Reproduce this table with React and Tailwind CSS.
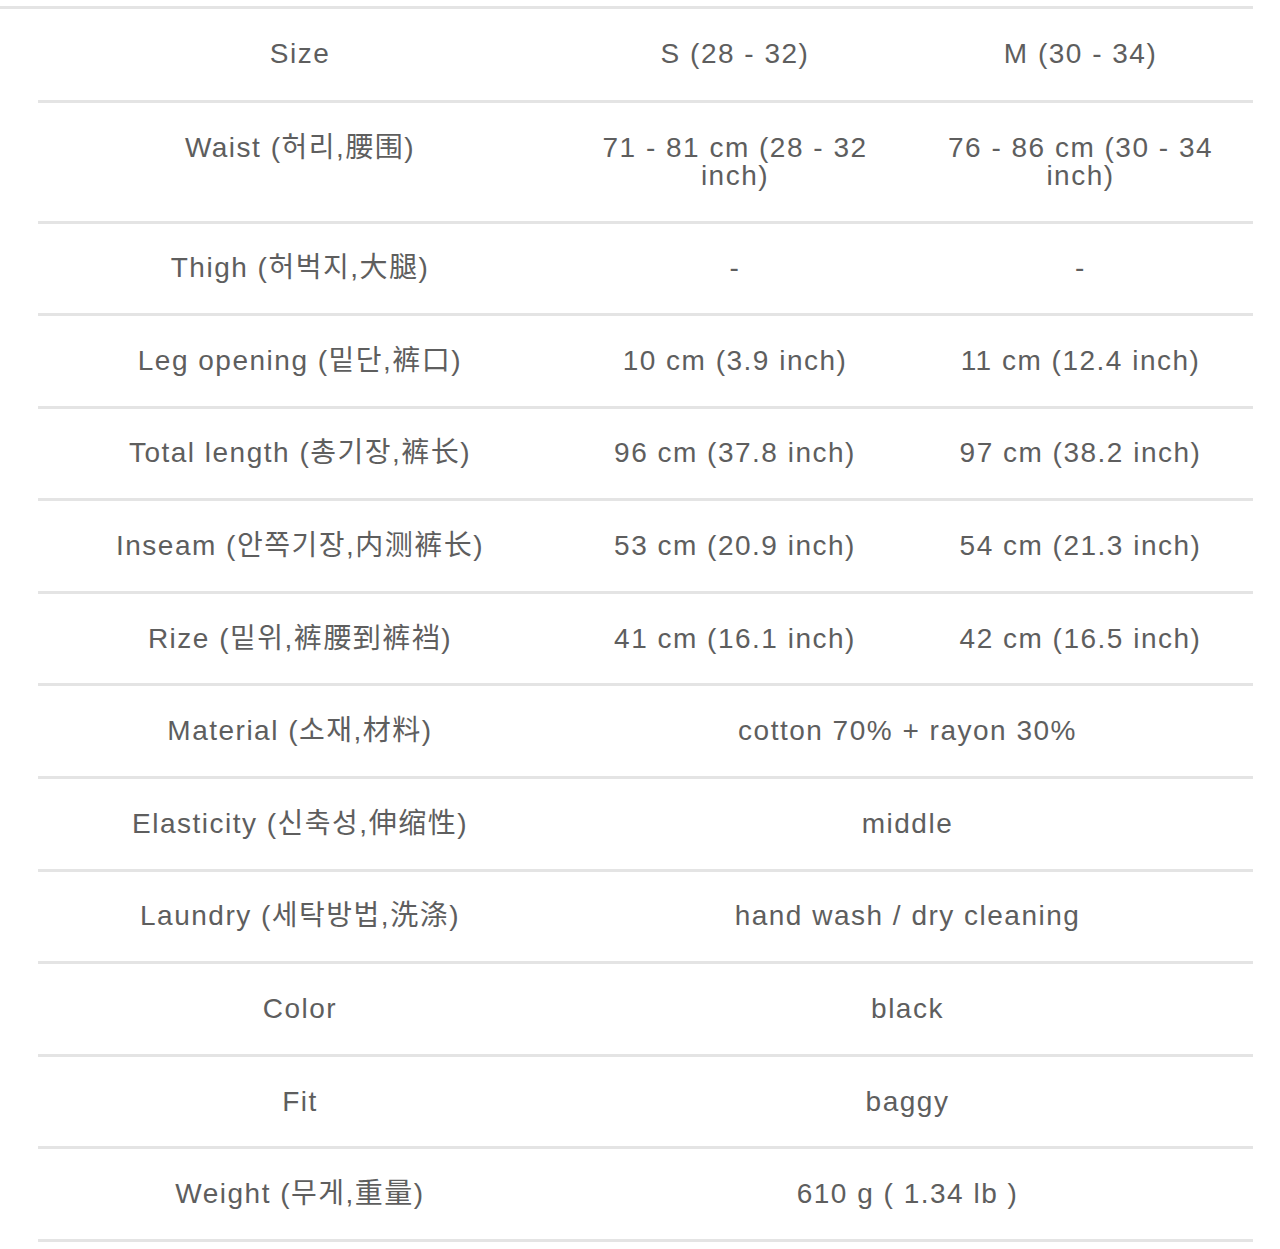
const rows = [
  { label: 'Waist (허리,腰围)', s: ['71 - 81 cm (28 - 32', 'inch)'], m: ['76 - 86 cm (30 - 34', 'inch)'], tall: true },
  { label: 'Thigh (허벅지,大腿)', s: '-', m: '-' },
  { label: 'Leg opening (밑단,裤口)', s: '10 cm (3.9 inch)', m: '11 cm (12.4 inch)' },
  { label: 'Total length (총기장,裤长)', s: '96 cm (37.8 inch)', m: '97 cm (38.2 inch)' },
  { label: 'Inseam (안쪽기장,内测裤长)', s: '53 cm (20.9 inch)', m: '54 cm (21.3 inch)' },
  { label: 'Rize (밑위,裤腰到裤裆)', s: '41 cm (16.1 inch)', m: '42 cm (16.5 inch)' },
  { label: 'Material (소재,材料)', both: 'cotton 70% + rayon 30%' },
  { label: 'Elasticity (신축성,伸缩性)', both: 'middle' },
  { label: 'Laundry (세탁방법,洗涤)', both: 'hand wash / dry cleaning' },
  { label: 'Color', both: 'black' },
  { label: 'Fit', both: 'baggy' },
  { label: 'Weight (무게,重量)', both: '610 g ( 1.34 lb )' },
]

function Cell({ value }) {
  if (Array.isArray(value)) {
    return (
      <>
        {value[0]}
        <br />
        {value[1]}
      </>
    )
  }
  return value
}

export default function App() {
  const td = 'border-b-[3px] border-[#e4e4e4] text-center align-middle p-0'
  return (
    <div
      className="bg-white w-[1280px] min-h-[1249px] pt-[6px] text-[28px] leading-[28px] tracking-[1.5px] text-[#5e5e5e]"
      style={{ fontFamily: '"Liberation Sans", "Noto Sans CJK KR", sans-serif' }}
    >
      <div className="w-[1253px] border-t-[3px] border-[#e4e4e4]" />
      <table className="ml-[38px] w-[1215px] border-collapse table-fixed">
        <colgroup>
          <col className="w-[524px]" />
          <col className="w-[346px]" />
          <col className="w-[345px]" />
        </colgroup>
        <tbody>
          <tr>
            <td className={`${td} h-[92px]`}>Size</td>
            <td className={td}>S (28 - 32)</td>
            <td className={td}>M (30 - 34)</td>
          </tr>
          {rows.map((r) => (
            <tr key={r.label}>
              {/* label of the two-line row sits on the first line */}
              <td className={`${td} ${r.tall ? 'h-[121px] pb-[28px]' : 'h-[92.6px]'}`}>{r.label}</td>
              {r.both ? (
                <td className={td} colSpan={2}>
                  {r.both}
                </td>
              ) : (
                <>
                  <td className={td}>
                    <Cell value={r.s} />
                  </td>
                  <td className={td}>
                    <Cell value={r.m} />
                  </td>
                </>
              )}
            </tr>
          ))}
        </tbody>
      </table>
    </div>
  )
}
